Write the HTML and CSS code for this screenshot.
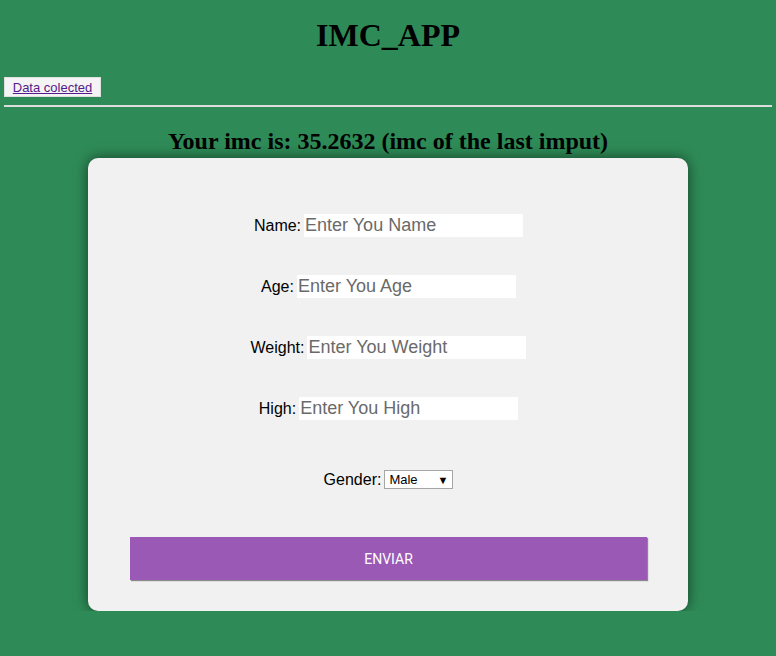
FILE: index.html
```html
<!DOCTYPE html>
<html>
<head>
<meta charset="utf-8">
<link rel="stylesheet" href="styles.css">
</head>
<body>
<h1 class="title">IMC_APP</h1>
<div class="nav"><button class="nav-btn"><a href="#" class="nav-link">Data colected</a></button></div>
<hr class="rule">
<h2 class="result">Your imc is: 35.2632 (imc of the last imput)</h2>
<div class="card">
  <form class="form">
    <div class="row"><label class="lbl">Name:</label> <input class="field" placeholder="Enter You Name"></div>
    <div class="row"><label class="lbl">Age:</label> <input class="field" placeholder="Enter You Age"></div>
    <div class="row"><label class="lbl">Weight:</label> <input class="field" placeholder="Enter You Weight"></div>
    <div class="row"><label class="lbl">High:</label> <input class="field" placeholder="Enter You High"></div>
    <div class="row row-gender"><label class="lbl">Gender:</label> <span class="select"><span class="select-text">Male</span><span class="arrow">&#9660;</span></span></div>
    <button type="button" class="submit">ENVIAR</button>
  </form>
</div>
</body>
</html>
```
FILE: styles.css
```css
html, body {
  background: #2e8b57;
}
body {
  margin: 0 4px;
  font-family: "Liberation Sans", Arial, sans-serif;
  color: #000;
}
.title {
  font-family: "Liberation Serif", "Times New Roman", serif;
  font-size: 32px;
  font-weight: bold;
  text-align: center;
  margin: 0;
  padding-top: 17px;
  height: 60px;
  line-height: 37px;
}
.nav {
  display: flex;
  height: 20px;
}
.nav-btn {
  background: #f4f4f4;
  border: 1px solid #e0e0e0;
  padding: 0 7px;
  height: 20px;
  font-family: "Liberation Sans", Arial, sans-serif;
  font-size: 13px;
  width: 97px;
}
.nav-link {
  color: #551a8b;
  text-decoration: underline;
}
.rule {
  margin: 8px 0 0;
  border: none;
  border-top: 2px solid #ddd;
  height: 0;
}
.result {
  font-family: "Liberation Serif", "Times New Roman", serif;
  font-size: 24px;
  font-weight: bold;
  text-align: center;
  margin: 0;
  padding-top: 20px;
  line-height: 28px;
  height: 30px;
}
.card {
  width: 600px;
  margin: 1px auto 0;
  background: #f1f1f1;
  border-radius: 10px;
  box-shadow: 0 0 14px rgba(0, 0, 0, 0.55);
  padding: 56px 41px 31px 42px;
  box-sizing: border-box;
  height: 453px;
}
.form {
  display: flex;
  flex-direction: column;
  align-items: stretch;
}
.row {
  display: flex;
  justify-content: center;
  align-items: center;
  height: 23px;
  margin-bottom: 38px;
  font-size: 16px;
}
.row-gender {
  margin-top: 10px;
  margin-bottom: 0;
}
.lbl {
  margin-right: 3px;
}
.field {
  width: 219px;
  height: 23px;
  box-sizing: border-box;
  border: none;
  background: #fff;
  padding: 0 1px;
  font-family: "Liberation Sans", Arial, sans-serif;
  font-size: 18px;
  outline: none;
}
.field::placeholder {
  color: #6a6a6a;
}
.select {
  display: inline-flex;
  align-items: center;
  justify-content: space-between;
  width: 69px;
  height: 19px;
  box-sizing: border-box;
  border: 1px solid #a6a6a6;
  background: #fff;
  padding: 0 4px;
  font-size: 13px;
}
.arrow {
  font-size: 11px;
}
.submit {
  margin-top: 46px;
  height: 43px;
  width: 517px;
  background: #9b59b6;
  border: none;
  box-shadow: 1px 1px 1px #8a8a8a;
  color: #fff;
  font-family: Roboto, "Liberation Sans", sans-serif;
  font-size: 14px;
}
```
